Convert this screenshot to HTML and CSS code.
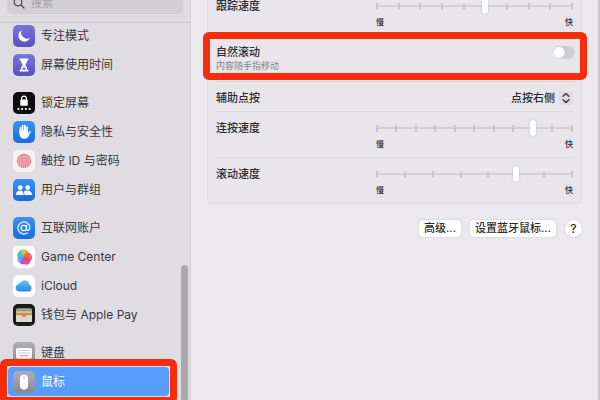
FILE: index.html
```html
<!DOCTYPE html>
<html lang="zh-CN">
<head>
<meta charset="utf-8">
<meta name="viewport" content="width=device-width, initial-scale=1">
<title>鼠标</title>
<link rel="stylesheet" href="styles.css">
</head>
<body>
<div class="window">
  <aside class="sidebar">
    <div class="sidebar-head">
      <label class="search">
        <svg class="search-icon" viewBox="0 0 12 12" aria-hidden="true"><circle cx="5" cy="5" r="3.9" fill="none" stroke="#4a494c" stroke-width="1.2"/><path d="M7.8 7.8 11 11" stroke="#4a494c" stroke-width="1.3" stroke-linecap="round"/></svg>
        <input class="search-input" type="search" placeholder="搜索" aria-label="搜索">
      </label>
    </div>
    <nav class="nav">
      <div class="group">
        <a class="item" href="#focus">
          <svg class="icon" viewBox="0 0 22 22" aria-hidden="true"><defs><linearGradient id="purple" x2="0" y2="1"><stop stop-color="#7b74dc"/><stop offset="1" stop-color="#5a50bf"/></linearGradient><linearGradient id="blue" x2="0" y2="1"><stop stop-color="#3a92f2"/><stop offset="1" stop-color="#176ddb"/></linearGradient><linearGradient id="gray" x2="0" y2="1"><stop stop-color="#b0afb2"/><stop offset="1" stop-color="#89888c"/></linearGradient></defs><rect width="22" height="22" rx="5" fill="url(#purple)"/><path d="M8.6 5A6.2 6.2 0 1 0 17.2 13.1 6.3 6.3 0 0 1 8.6 5Z" fill="#fff"/></svg>
          <span>专注模式</span></a>
        <a class="item" href="#screen-time">
          <svg class="icon" viewBox="0 0 22 22" aria-hidden="true"><rect width="22" height="22" rx="5" fill="url(#purple)"/><path d="M6.700 4.500h8.600v1.800h-1C14.200 9 12.500 9.700 12.500 11s1.700 2 1.800 4.700h1v1.800H6.700v-1.800h1C7.800 13 9.500 12.300 9.500 11S7.800 9 7.700 6.300h-1Z" fill="#fff"/><path d="M9 15.600c.2-1.300 1.200-1.600 2-2.600.8 1 1.800 1.300 2 2.600Z" fill="#675ecb"/></svg>
          <span>屏幕使用时间</span></a>
      </div>
      <div class="group">
        <a class="item" href="#lock">
          <svg class="icon" viewBox="0 0 22 22" aria-hidden="true"><rect width="22" height="22" rx="5" fill="#0c0c0d"/><rect x="7.200" y="7.500" width="7.600" height="6.200" rx="1" fill="#fff"/><path d="M8.700 8V6.400a2.300 2.300 0 0 1 4.600 0V8" fill="none" stroke="#fff" stroke-width="1.200"/><g fill="#fff"><circle cx="5.400" cy="17" r="1.100"/><circle cx="9.100" cy="17" r="1.100"/><circle cx="12.900" cy="17" r="1.100"/><circle cx="16.600" cy="17" r="1.100"/></g></svg>
          <span>锁定屏幕</span></a>
        <a class="item" href="#privacy">
          <svg class="icon" viewBox="0 0 22 22" aria-hidden="true"><rect width="22" height="22" rx="5" fill="url(#blue)"/><path d="M7.400 12V7M9.600 10.500V5M11.900 10.500V4.700M14.100 11V6.200" stroke="#fff" stroke-width="1.800" stroke-linecap="round"/><path d="M6.500 9.500h8.500v2.600l1.300-1.700c.7-.8 1.800-.2 1.400.7l-2.300 4.400c-.8 1.500-2.100 2.200-4 2.200-3.200 0-4.900-2-4.900-5Z" fill="#fff"/></svg>
          <span>隐私与安全性</span></a>
        <a class="item" href="#touch-id">
          <svg class="icon" viewBox="0 0 22 22" aria-hidden="true"><rect width="22" height="22" rx="5" fill="#f6f3f4"/><circle cx="11" cy="11" r="7.300" fill="#eeb0b8"/><g fill="none" stroke="#df7888" stroke-width=".9" stroke-linecap="round"><path d="M5.500 7A7 7 0 0 1 16.500 7M4.400 12a6.600 6.600 0 0 1 13.200-1v2M6.200 15.500c.5-1.500.2-3 .5-4.500a4.400 4.400 0 0 1 8.700.5c0 1.800-.1 3-.6 4.500M8.300 17c.7-2 .3-3.800.6-5.700a2.200 2.200 0 0 1 4.300.5c0 2-.2 3.700-.8 5.500M11 11.800c0 2-.2 4-.7 5.800"/></g></svg>
          <span>触控 ID 与密码</span></a>
        <a class="item" href="#users">
          <svg class="icon" viewBox="0 0 22 22" aria-hidden="true"><rect width="22" height="22" rx="5" fill="url(#blue)"/><g fill="#fff"><circle cx="7.300" cy="8.600" r="2.400"/><circle cx="14.700" cy="8.600" r="2.400"/><path d="M3 15.900c0-2.900 1.700-4.400 4.100-4.400s3.600 1.500 3.600 4.400ZM11.500 15.900c0-1.700-.3-2.500-.8-3.200.8-.8 2-1.200 3.800-1.200 2.600 0 4.500 1.500 4.500 4.400Z"/></g></svg>
          <span>用户与群组</span></a>
      </div>
      <div class="group">
        <a class="item" href="#accounts">
          <svg class="icon" viewBox="0 0 22 22" aria-hidden="true"><rect width="22" height="22" rx="5" fill="url(#blue)"/><g fill="none" stroke="#e8f3ff" stroke-width="1.300" stroke-linecap="round"><circle cx="10.800" cy="11" r="2.700"/><path d="M13.600 8.300v3.800c0 2.200 3.300 1.700 3.300-1.300a6 6 0 1 0-2.700 5.200"/></g></svg>
          <span>互联网账户</span></a>
        <a class="item" href="#game-center">
          <svg class="icon" viewBox="0 0 22 22" aria-hidden="true"><defs><linearGradient id="bubble" x1="0" y1=".6" x2="1" y2=".3"><stop stop-color="#48a8ef"/><stop offset=".35" stop-color="#52cf9c"/><stop offset=".6" stop-color="#d6d13b"/><stop offset="1" stop-color="#fb7340"/></linearGradient></defs><rect width="22" height="22" rx="5" fill="#fff"/><circle cx="10.500" cy="9.200" r="6" fill="url(#bubble)"/><circle cx="14.600" cy="11.500" r="4.700" fill="#f85a4d" opacity=".9"/><circle cx="7.500" cy="13.500" r="3.200" fill="#4fa4f3" opacity=".85"/><circle cx="13.200" cy="15" r="3.800" fill="#ee3c8d" opacity=".9"/><circle cx="9.300" cy="16.300" r="2.200" fill="#b44ce9"/></svg>
          <span>Game Center</span></a>
        <a class="item" href="#icloud">
          <svg class="icon" viewBox="0 0 22 22" aria-hidden="true"><defs><linearGradient id="cloud" x2="0" y2="1"><stop stop-color="#6dc0fa"/><stop offset="1" stop-color="#2485ea"/></linearGradient></defs><rect width="22" height="22" rx="5" fill="#fff"/><path d="M6 16.500a3.600 3.600 0 0 1-.9-7A3.200 3.200 0 0 1 8 7.300a4.600 4.600 0 0 1 8.300 2.500 3.500 3.500 0 0 1-.6 6.700Z" fill="url(#cloud)"/></svg>
          <span>iCloud</span></a>
        <a class="item" href="#wallet">
          <svg class="icon" viewBox="0 0 22 22" aria-hidden="true"><rect width="22" height="22" rx="5" fill="#1b1b1b"/><rect x="3" y="4.500" width="16" height="13.500" rx="1.500" fill="#cfd1c1"/><path d="M3 6a1.500 1.500 0 0 1 1.500-1.500h13A1.500 1.500 0 0 1 19 6v1.500H3Z" fill="#84a987"/><path d="M3 7.300h16v2H3Z" fill="#e8bc61"/><path d="M3 9.300h16v1.800H3Z" fill="#dc7a62"/><path d="M3 11h4.500c1 0 1.200 2 3.500 2s2.500-2 3.500-2H19v5.500a1.500 1.500 0 0 1-1.500 1.500h-13A1.500 1.500 0 0 1 3 16.500Z" fill="#d9dace"/><path d="M7.500 10.800h7c-1 .3-1.300 2.200-3.500 2.200s-2.500-1.900-3.500-2.200Z" fill="#dc7a62"/></svg>
          <span>钱包与 Apple Pay</span></a>
      </div>
      <div class="group">
        <a class="item" href="#keyboard">
          <svg class="icon" viewBox="0 0 22 22" aria-hidden="true"><rect width="22" height="22" rx="5" fill="url(#gray)"/><rect x="3" y="6" width="16" height="10.500" rx="1.500" fill="#fff"/><path d="M5 8.500h12M5 11h12" stroke="#b9b8bb" stroke-width="1.200" stroke-dasharray="1.300 .8"/><path d="M7 13.700h8" stroke="#aaa9ac" stroke-width="1.200"/></svg>
          <span>键盘</span></a>
        <a class="item selected" href="#mouse" aria-current="page">
          <svg class="icon" viewBox="0 0 22 22" aria-hidden="true"><rect width="22" height="22" rx="5" fill="url(#gray)"/><rect x="7" y="3.500" width="8" height="15" rx="4" fill="#fff"/><circle cx="11" cy="6.500" r=".8" fill="#a5a4a8"/></svg>
          <span>鼠标</span></a>
      </div>
    </nav>
    <div class="scroll-thumb"></div>
  </aside>

  <main class="content">
    <section class="card">
      <div class="row">
        <label class="title" for="tracking">跟踪速度</label>
        <div class="slider">
          <div class="track">
            <div class="ticks"><i></i><i></i><i></i><i></i><i></i><i></i><i></i><i></i><i></i><i></i></div>
            <input id="tracking" type="range" min="0" max="9" value="5">
          </div>
          <div class="ends"><span>慢</span><span>快</span></div>
        </div>
      </div>
      <div class="row natural">
        <label for="natural"><span class="title">自然滚动</span><small class="hint">内容随手指移动</small></label>
        <input id="natural" class="switch" type="checkbox" role="switch">
      </div>
      <div class="row compact">
        <label class="title" for="secondary">辅助点按</label>
        <div class="picker">
          <select id="secondary"><option>点按右侧</option></select>
          <svg class="chevrons" viewBox="0 0 12 12" aria-hidden="true"><path d="M3.500 4.500 6 2.200l2.500 2.300M3.500 7.500 6 9.800l2.500-2.300" fill="none" stroke="#3c3b3e" stroke-width="1.300" stroke-linecap="round" stroke-linejoin="round"/></svg>
        </div>
      </div>
      <div class="row">
        <label class="title" for="double">连按速度</label>
        <div class="slider">
          <div class="track">
            <div class="ticks"><i></i><i></i><i></i><i></i><i></i><i></i><i></i><i></i><i></i><i></i><i></i></div>
            <input id="double" type="range" min="0" max="10" value="8">
          </div>
          <div class="ends"><span>慢</span><span>快</span></div>
        </div>
      </div>
      <div class="row">
        <label class="title" for="scrolling">滚动速度</label>
        <div class="slider">
          <div class="track">
            <div class="ticks"><i></i><i></i><i></i><i></i><i></i><i></i><i></i><i></i></div>
            <input id="scrolling" type="range" min="0" max="7" value="5">
          </div>
          <div class="ends"><span>慢</span><span>快</span></div>
        </div>
      </div>
    </section>
    <div class="actions">
      <button type="button">高级...</button>
      <button type="button">设置蓝牙鼠标...</button>
      <button type="button" class="help" aria-label="帮助">?</button>
    </div>
  </main>
</div>
</body>
</html>
```
FILE: styles.css
```css
* {
  box-sizing: border-box;
}

body {
  margin: 0;
  font-family: Inter, "Noto Sans CJK SC", sans-serif;
  font-size: 11px;
  color: #2c2b2e;
  background: #ebe9ee;
}

input,
select,
button {
  margin: 0;
  font: inherit;
  color: inherit;
}

.window {
  display: flex;
  height: 100vh;
  overflow: hidden;
  border-right: 2px solid #c9c7cc;
}

/* Sidebar */
.sidebar {
  position: relative;
  flex: 0 0 191px;
  min-width: 0;
  background: #e0dde2;
  border-right: 1px solid #d3d0d6;
}

.sidebar-head {
  display: flow-root;
  height: 23px;
  padding: 0 7px;
  border-bottom: 1px solid #cdcad0;
}

.search {
  display: flex;
  align-items: center;
  gap: 6px;
  height: 22px;
  margin-top: -8px;
  padding: 0 6px;
  border-radius: 5px;
  background: #d2cfd4;
}

.search-icon {
  flex: none;
  width: 12px;
  height: 12px;
}

.search-input {
  flex: 1;
  width: 100%;
  min-width: 0;
  padding: 0;
  border: 0;
  outline: 0;
  background: none;
  line-height: 16px;
  appearance: none;
}

.search-input::placeholder {
  color: #a5a2a8;
}

.nav {
  display: flex;
  flex-direction: column;
  gap: 9px;
  margin-top: -2px;
  padding: 0 21px 0 8px;
}

.item {
  position: relative;
  display: flex;
  align-items: center;
  gap: 6px;
  height: 29px;
  padding: 0 5px;
  border-radius: 4px;
  font-size: 12px;
  line-height: 18px;
  white-space: nowrap;
  color: #39383b;
  text-decoration: none;
}

.icon {
  flex: none;
  width: 22px;
  height: 22px;
}

.selected {
  background: #579dfd;
  color: #fff;
}

.selected::after,
.natural::after {
  content: "";
  position: absolute;
  border: 7px solid #f52d0c;
  border-radius: 6px;
  pointer-events: none;
}

.selected::after {
  inset: -8px;
}

.scroll-thumb {
  position: absolute;
  top: 265px;
  right: 2px;
  bottom: -8px;
  width: 7px;
  border-radius: 4px;
  background: #aaa8ac;
}

/* Settings pane */
.content {
  flex: 1;
  display: flow-root;
  min-width: 0;
  padding: 0 16px;
}

.card {
  margin-top: -11px;
  padding: 0 6px 0 8px;
  border: 1px solid #dfdde2;
  border-radius: 5px;
  background: #e8e6eb;
}

.row {
  position: relative;
  display: flex;
  justify-content: space-between;
  height: 46px;
  padding-top: 8px;
}

.row + .row {
  border-top: 1px solid #dddbe0;
}

.row + .natural {
  height: 45px;
  padding-top: 7px;
}

.title {
  display: block;
  font-weight: 500;
  line-height: 16px;
}

.hint {
  display: block;
  font-size: 9px;
  line-height: 12px;
  color: #858388;
}

.natural::after {
  inset: -5px -12px 1px -13px;
}

.row.compact {
  height: 30px;
}

.slider {
  width: 56%;
}

.track {
  display: grid;
  height: 16px;
}

.track > * {
  grid-area: 1 / 1;
}

.ticks {
  display: flex;
  align-items: center;
  justify-content: space-between;
  height: 16px;
  padding: 0 2px;
  background: linear-gradient(#d3d1d6, #d3d1d6) center / calc(100% - 4px) 2px no-repeat;
}

.ticks i {
  width: 2px;
  height: 7px;
  border-radius: 1px;
  background: #c6c4c9;
}

.track input {
  width: 100%;
  height: 16px;
  appearance: none;
  background: none;
}

.track input::-webkit-slider-thumb {
  appearance: none;
  width: 6px;
  height: 16px;
  border-radius: 3px;
  background: #fff;
  box-shadow: 0 0 2px #a9a7ac;
}

.ends {
  display: flex;
  justify-content: space-between;
  padding: 2px 2px 0;
  font-size: 8px;
  font-weight: 500;
  line-height: 12px;
}

.switch {
  width: 22px;
  height: 13px;
  margin-top: 2px;
  border-radius: 7px;
  appearance: none;
  background: radial-gradient(circle at 6px 50%, #fff 5px, transparent 6px) #cfcdd2;
}

.picker {
  display: flex;
  align-items: center;
  gap: 4px;
  height: 16px;
  padding-right: 2px;
}

.picker select {
  padding: 0;
  border: 0;
  appearance: none;
  background: none;
  font-weight: 500;
  line-height: 16px;
}

.chevrons {
  width: 14px;
  height: 14px;
  border-radius: 3px;
  background: #dedce1;
}

.actions {
  display: flex;
  justify-content: flex-end;
  gap: 9px;
  margin-top: 16px;
}

.actions button {
  height: 17px;
  padding: 0 5px;
  border: 0;
  border-radius: 4px;
  background: #fff;
  box-shadow: 0 0 2px #c0bec4;
  font-weight: 500;
  line-height: 17px;
}

.actions .help {
  width: 17px;
  padding: 0;
  border-radius: 50%;
  font-size: 12px;
}
```
